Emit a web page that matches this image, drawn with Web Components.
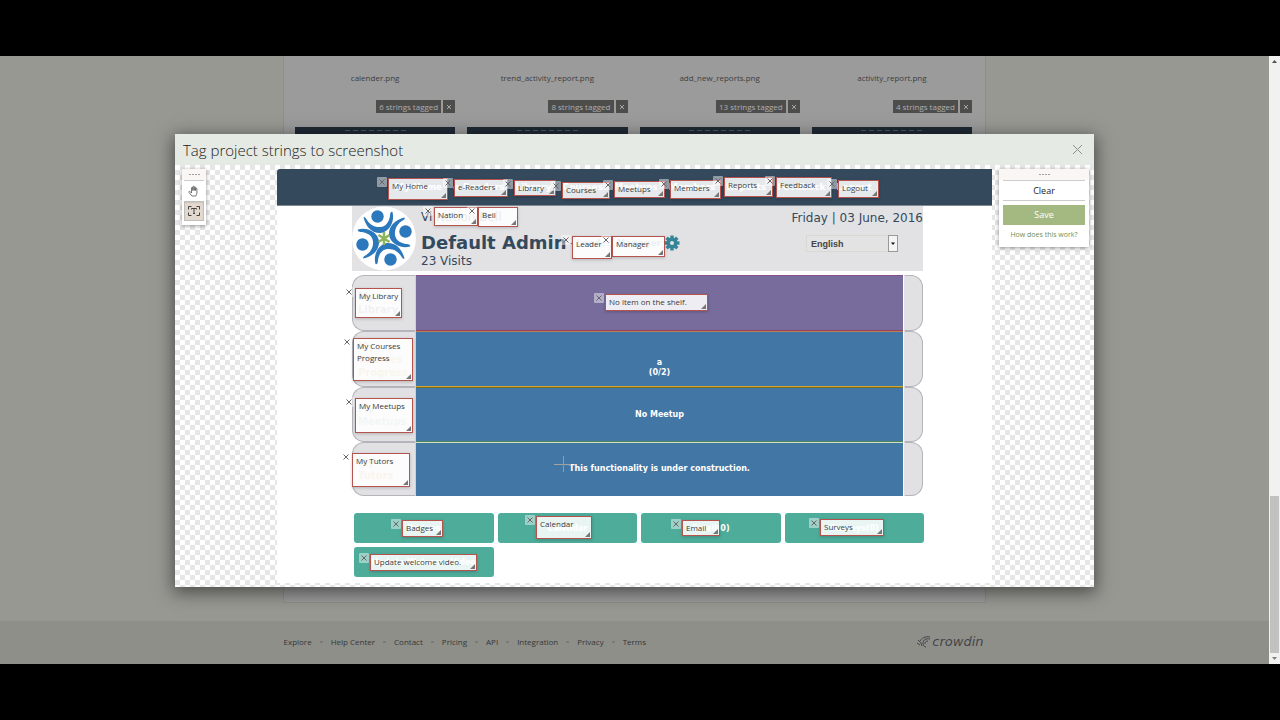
<!DOCTYPE html>
<html lang="en">
<head>
<meta charset="utf-8">
<title>Tag project strings to screenshot</title>
<style>
html,body{margin:0;background:#000}
body{font-family:"Open Sans",sans-serif;font-size:8px;line-height:12px;color:#444}
</style>
</head>
<body>
<app-stage>
  <files-panel>
    <file-card name="calender.png" tagged="6"></file-card>
    <file-card name="trend_activity_report.png" tagged="8"></file-card>
    <file-card name="add_new_reports.png" tagged="13"></file-card>
    <file-card name="activity_report.png" tagged="4"></file-card>
  </files-panel>
  <site-footer></site-footer>
  <tag-dialog slot="dialog" heading="Tag project strings to screenshot">
    <tool-palette slot="tools"></tool-palette>
    <shot-canvas>
      <site-nav></site-nav>
      <user-banner></user-banner>
      <shelf-list>
        <shelf-row label="My Library" tone="purple"></shelf-row>
        <shelf-row label="My Courses Progress" tone="orange">a<br>(0/2)</shelf-row>
        <shelf-row label="My Meetups" tone="olive">No Meetup</shelf-row>
        <shelf-row label="My Tutors" tone="green">This functionality is under construction.</shelf-row>
      </shelf-list>
      <quick-links></quick-links>
      <string-tag slot="tag" x="111" y="9" w="60" h="22">My Home</string-tag>
      <string-tag slot="tag" x="177" y="10" w="54" h="18">e-Readers</string-tag>
      <string-tag slot="tag" x="237" y="11" w="42" h="16">Library</string-tag>
      <string-tag slot="tag" x="285" y="13" w="48" h="17">Courses</string-tag>
      <string-tag slot="tag" x="337" y="12" w="51" h="17">Meetups</string-tag>
      <string-tag slot="tag" x="393" y="11" w="51" h="19">Members</string-tag>
      <string-tag slot="tag" x="447" y="8" w="49" h="20">Reports</string-tag>
      <string-tag slot="tag" x="499" y="8" w="56" h="21">Feedback</string-tag>
      <string-tag slot="tag" x="561" y="11" w="41" h="18">Logout</string-tag>
      <string-tag slot="tag" x="157" y="38" w="44" h="19">Nation</string-tag>
      <string-tag slot="tag" x="201" y="38" w="40" h="20">Bell</string-tag>
      <string-tag slot="tag" x="295" y="67" w="40" h="23">Leader</string-tag>
      <string-tag slot="tag" x="335" y="67" w="53" h="21">Manager</string-tag>
      <string-tag slot="tag" x="78" y="119" w="47" h="30">My Library</string-tag>
      <string-tag slot="tag" x="328" y="125" w="103" h="17">No item on the shelf.</string-tag>
      <string-tag slot="tag" x="76" y="169" w="60" h="43" wrap>My Courses Progress</string-tag>
      <string-tag slot="tag" x="78" y="229" w="58" h="35">My Meetups</string-tag>
      <string-tag slot="tag" x="75" y="284" w="58" h="34">My Tutors</string-tag>
      <string-tag slot="tag" x="125" y="351" w="41" h="17">Badges</string-tag>
      <string-tag slot="tag" x="259" y="347" w="56" h="23">Calendar</string-tag>
      <string-tag slot="tag" x="405" y="351" w="38" h="16">Email</string-tag>
      <string-tag slot="tag" x="543" y="350" w="64" h="17">Surveys</string-tag>
      <string-tag slot="tag" x="93" y="385" w="107" h="17">Update welcome video.</string-tag>
    </shot-canvas>
    <action-panel slot="actions"></action-panel>
  </tag-dialog>
</app-stage>

<script>
class BaseElement extends HTMLElement {
  connectedCallback() {
    if (this.shadowRoot) return;
    this.attachShadow({ mode: 'open' }).innerHTML = this.render();
  }
}
const define = (name, render) =>
  customElements.define(name, class extends BaseElement { render() { return render(this); } });

/* Viewport frame: page area between two black bands, with the page scrollbar */
define('app-stage', () => `
<style>
:host{display:flex;flex-direction:column;min-height:100vh;box-sizing:border-box;padding:56px 0}
.view{flex:1;display:flex;position:relative;background:#989893}
.page{flex:1;min-width:0;display:flex;flex-direction:column;position:relative}
::slotted([slot=dialog]){position:absolute;top:78px;left:0;right:0;margin:0 auto}
.bar{width:11px;display:flex;flex-direction:column;justify-content:flex-end;align-items:center;background:#f1f1f1}
.thumb{width:9px;height:157px;background:#c1c1c1}
svg{display:block}
.gap{flex:1}
</style>
<div class="view">
  <div class="page"><slot></slot><slot name="dialog"></slot></div>
  <div class="bar"><svg width="11" height="11"><path d="M5.500 4l2.500 3h-5z" fill="#505050"/></svg><div class="gap"></div>
  <div class="thumb"></div><svg width="11" height="11"><path d="M3 4h5l-2.500 3z" fill="#808080"/></svg></div>
</div>`);

define('files-panel', () => `
<style>
:host{flex:1;display:grid;grid-template-columns:repeat(4,1fr);gap:12px;align-content:start;box-sizing:border-box;
 width:703px;max-width:100%;margin:0 auto 18px;padding:16px 13px 0 11px;background:#9b9b9b;border:1px solid #8d8d8b;border-top:0}
</style><slot></slot>`);

define('file-card', el => `
<style>
:host{display:flex;flex-direction:column}
.name{text-align:center;color:#3e3e3e}
.row{display:flex;justify-content:flex-end;gap:2px;margin:16px 0 14px}
.count,button{box-sizing:border-box;height:13px;line-height:13px;padding:0 3px;background:#4d4d4c;color:#aeaeae;border:0}
button{width:12px;padding:2px;display:block}
svg{display:block}
.thumb{height:40px;background:#1f2a36;display:flex;justify-content:center;gap:3px;padding-top:3px;box-sizing:border-box}
.thumb i{width:5px;height:1px;background:#4a5662}
</style>
<div class="name">${el.getAttribute('name')}</div>
<div class="row"><span class="count">${el.getAttribute('tagged')} strings tagged</span>
<button aria-label="Remove"><svg width="8" height="8"><path d="M2 2l4 4M6 2l-4 4" stroke="#a5a5a5"/></svg></button></div>
<div class="thumb">${'<i></i>'.repeat(8)}</div>`);

define('site-footer', () => `
<style>
:host{display:block;background:#8f8f89}
footer{display:flex;align-items:center;justify-content:space-between;box-sizing:border-box;width:702px;max-width:100%;height:43px;margin:0 auto;padding:0 2px 2px 0}
nav{display:flex;gap:8px}
a{color:#33383b;text-decoration:none}
nav i{width:3px;height:2px;margin-top:5px;background:#7b7b77}
.logo{display:flex;align-items:center;gap:1px;font:italic 13px "DejaVu Sans",sans-serif;color:#42464a}
.logo svg{display:block}
</style>
<footer><nav>${['Explore','Help Center','Contact','Pricing','API','Integration','Privacy','Terms'].map(t => `<a href="#">${t}</a>`).join('<i></i>')}</nav>
<a class="logo" href="#"><svg width="14" height="12" viewBox="0 0 14 12" fill="none" stroke="#42464a"><path d="M13 1C8 0 5 2 3 5M13 3C9 2 6 4 6 7c0 2 1 4 3 4M11 5C9 5 8 6 8 8M1 4l3 3 1 3M0 7l3 2"/></svg>crowdin</a></footer>`);

define('tag-dialog', el => `
<style>
:host{display:block;width:919px;max-width:calc(100% - 24px);box-shadow:0 4px 16px 2px rgba(0,0,0,.5);background:#fff}
header{display:flex;align-items:center;justify-content:space-between;height:31px;padding:0 11px 0 8px;background:#e6eae4}
h2{margin:0;font-size:15px;line-height:20px;font-weight:300;color:#222}
button{display:block;padding:0;border:0;background:none}
svg{display:block}
.body{display:flex;align-items:flex-start;padding:4px 5px 4px 7px;
 background:repeating-conic-gradient(#e6e6e6 0 25%,#fff 0 50%) 0 0/10px 10px}
::slotted(shot-canvas){margin:0 7px 0 auto}
</style>
<header><h2>${el.getAttribute('heading')}</h2><button aria-label="Close"><svg width="11" height="11"><path d="M1 1l9 9M10 1l-9 9" stroke="#8d918c"/></svg></button></header>
<div class="body"><slot name="tools"></slot><slot></slot><slot name="actions"></slot></div>`);

const grip = '<div class="grip"><i></i><i></i><i></i><i></i></div>';
const gripCss = `.grip{display:flex;justify-content:center;gap:1px;height:11px;align-items:center;background:#faf6f3}
.grip i{width:2px;height:1px;background:#a0a0a0}`;

define('tool-palette', () => `
<style>
:host{display:block;width:24px;padding-bottom:4px;background:#fff;box-shadow:0 1px 4px rgba(0,0,0,.4)}
${gripCss}
.tools{display:flex;flex-direction:column;margin:0 2px;border-top:1px solid #ccc}
button{display:flex;align-items:center;justify-content:center;height:20px;padding:0;border:0;background:none}
button.on{background:#e3d9cf;box-shadow:inset 0 0 0 1px #c0c0ba,inset 0 1px 2px #999}
</style>
${grip}
<div class="tools">
<button aria-label="Pan"><svg width="12" height="12" viewBox="0 0 12 12" fill="none" stroke="#555"><path d="M4 11L1 7.500C.5 6.500 1.500 6 2.300 6.700L3.500 8V3c0-1 1.300-1 1.300 0v2.500V2c0-1 1.400-1 1.400 0v3.500V2.500c0-1 1.400-1 1.400 0v3V4c0-1 1.300-1 1.300 0v4c0 1-.5 2-1 3z" stroke-width=".8"/></svg></button>
<button class="on" aria-label="Select text"><svg width="12" height="12" viewBox="0 0 12 12" fill="none" stroke="#444"><path d="M3.500 1.500h-3v3M.5 7.500v3h3M8.500 1.500h3v3M11.500 7.500v3h-3M3.500 4.500v-1h5v1M6 3.500v5M5 8.500h2"/></svg></button>
</div>`);

define('action-panel', () => `
<style>
:host{display:block;width:90px;background:#fff;box-shadow:0 1px 4px rgba(0,0,0,.4);padding-bottom:6px}
${gripCss}
.col{display:flex;flex-direction:column;margin:0 4px}
button{height:20px;padding:0;border:0;background:none;font:inherit;font-size:9px;line-height:12px;color:#222}
.clear{border:solid #ccc;border-width:1px 0;height:21px}
.save{margin:4px 0 0;background:#a3b981;color:#fff}
a{align-self:center;margin-top:4px;font-size:7px;color:#74904f;text-decoration:none}
</style>
${grip}<div class="col"><button class="clear">Clear</button><button class="save">Save</button><a href="#">How does this work?</a></div>`);

/* Screenshot being tagged; tags are pinned over it */
define('shot-canvas', () => `
<style>
:host{display:block;position:relative;flex:none;width:715px;padding-bottom:6px;background:#fff;border-radius:3px 0 0 0;font-family:"DejaVu Sans",sans-serif}
.cross{position:absolute;left:277px;top:286px}
.inner{display:flex;flex-direction:column}
</style>
<div class="inner"><slot></slot></div><slot name="tag"></slot>
<svg class="cross" width="17" height="17"><path d="M0 9.500h17" stroke="#a2a4a0"/><path d="M9.500 1v16" stroke="#c98b62"/></svg>`);

define('site-nav', () => `
<style>
:host{display:block;background:#34495c;border-bottom:1px solid #7f8a92;border-radius:3px 0 0 0}
nav{display:flex;gap:11px;align-items:center;height:36px;padding-left:118px}
a{font-size:9px;font-weight:bold;color:#fff;text-decoration:none}
</style>
<nav>${['My Home','e-Readers','Library','Courses','Meetups','Members','Reports','Feedback','Logout'].map(t => `<a href="#">${t}</a>`).join('')}</nav>`);

define('user-banner', () => `
<style>
:host{display:flex;height:65px;margin:0 69px 0 75px;background:#e2e2e4;color:#34495c}
.logo{display:block;flex:none}
.who{display:flex;flex-direction:column;margin-left:5px}
.greet{font-size:12px;line-height:16px;margin-top:3px}
h1{display:flex;align-items:center;margin:8px 0 0;font-size:18px;line-height:20px;white-space:nowrap}
h1 span{font-size:9px;color:#5a8f98;margin:0 3px}
.visits{font-size:12px;line-height:16px}
.side{margin-left:auto;display:flex;flex-direction:column;align-items:flex-end;font-size:12px;line-height:16px;padding-top:4px}
.pick{position:relative;margin:9px 25px 0 0}
select{display:block;appearance:none;width:92px;height:17px;padding:0 14px 0 4px;border:1px solid #d9d9d4;border-radius:0;background:#e3e3e3;font:bold 9px "Liberation Sans",sans-serif;color:#444}
.pick svg{position:absolute;right:0;top:0;pointer-events:none}
</style>
<svg class="logo" width="64" height="65" viewBox="0 0 64 65"><circle cx="32" cy="32.500" r="32" fill="#fff"/>
<defs><g id="p"><circle cx="25.500" cy="10.500" r="6.200"/><path d="M11.500 11.500C14 21 20 27.500 29 27C38 25.500 43 15 40.500 6C39 5 38 7 38 10C37 16 34 20.500 28.500 21C22 21.500 17 18 14 12.500C13 11 12 11 11.500 11.500z"/></g></defs>
<g fill="#2b78bd"><use href="#p"/><use href="#p" transform="rotate(90 32 32)"/><use href="#p" transform="rotate(180 32 32)"/><use href="#p" transform="rotate(270 32 32)"/></g>
<path d="M32 26v13M26.500 29l11 7M37.500 29l-11 7" stroke="#8db55a" stroke-width="2.500"/></svg>
<div class="who"><div class="greet">Vi Nation Bell</div>
<h1>Default Admin<span>- Leader, Manager</span><svg width="16" height="16" viewBox="-8 -8 16 16"><g fill="#358597"><circle r="5.500"/>${[0,45,90,135].map(a => `<rect x="-1.700" y="-7.500" width="3.400" height="15" transform="rotate(${a})"/>`).join('')}</g><circle r="2" fill="#e2e2e4"/></svg></h1>
<div class="visits">23 Visits</div></div>
<div class="side"><div>Friday | 03 June, 2016</div>
<div class="pick"><select aria-label="Language"><option>English</option></select><svg width="10" height="17"><rect x=".5" y=".5" width="9" height="16" fill="#f4f4f4" stroke="#999"/><path d="M3 7.500h4l-2 2.500z" fill="#111"/></svg></div></div>`);

define('shelf-list', () => `
<style>:host{display:flex;flex-direction:column;margin:4px 69px 0 75px}</style><slot></slot>`);

const tones = {
  purple: ['#776c9c', '#84508a', '#9a3f5c', '#8d8d99'],
  orange: ['#4276a5', '#b5805c', '#d3a52f', '#c9b070'],
  olive: ['#4276a5', '#77701f', '#4f8262', '#8fb0b0'],
  green: ['#4276a5', '#cfe3ba', '#4276a5', '#d0a070']
};
define('shelf-row', el => {
  const [bg, top, bottom, ink] = tones[el.getAttribute('tone')];
  return `
<style>
:host{display:flex;height:56px;color:#fff;font-size:8px;font-weight:bold;line-height:10px}
:host([tone=olive]){height:55px}
:host([tone=green]){height:54px}
.label,.end{box-sizing:border-box;background:#e1e1e3;border:1px solid #b4b4ba}
.label{display:flex;align-items:center;width:64px;border-radius:12px 0 0 12px;border-right-color:#cfcfd4;padding:0 0 0 5px;font-size:10px;line-height:13px;color:${ink}}
.label span{width:min-content}
.main{flex:1;display:flex;align-items:center;justify-content:center;text-align:center;background:${bg};border:solid;border-width:1px 0;border-color:${top} transparent ${bottom}}
:host([tone=orange]) .main{padding-top:18px;height:36px}
.end{width:19px;margin-left:1px;border-left-color:#e1e1e3;border-radius:0 12px 12px 0}
</style>
<div class="label"><span>${el.getAttribute('label')}</span></div><div class="main"><div><slot></slot></div></div><div class="end"></div>`;
});

define('quick-links', () => `
<style>
:host{display:grid;grid-template-columns:repeat(4,1fr);gap:4px;margin:17px 68px 0 77px}
button{height:30px;padding:0;border:0;border-radius:3px;background:#4eac9b;color:#fff;font:bold 8px "DejaVu Sans",sans-serif}
</style>
${['Badges','Calendar','Email(0)','Surveys(0)','Update Welcome Video'].map(t => `<button>${t}</button>`).join('')}`);

define('string-tag', el => {
  const px = n => el.getAttribute(n) + 'px';
  return `
<style>
:host{display:block;position:absolute;box-sizing:border-box;left:${px('x')};top:${px('y')};width:${px('w')};height:${px('h')};
 padding:1px 0 0 3px;border:1px solid #b5544e;background:rgba(255,255,255,.88);box-shadow:0 1px 3px rgba(0,0,0,.2);
 font:8px/12px "Open Sans",sans-serif;color:#3b3b3b;white-space:nowrap}
:host([wrap]){white-space:normal}
button{position:absolute;left:-12px;top:-2px;width:10px;height:10px;padding:0;border:0;border-radius:1px;background:rgba(255,255,255,.45)}
svg{display:block}
.size{position:absolute;right:1px;bottom:1px}
</style>
<button aria-label="Remove tag"><svg width="10" height="10"><path d="M2.500 2.500l5 5M7.500 2.500l-5 5" stroke="#666"/></svg></button><slot></slot>
<svg class="size" width="5" height="5"><path d="M5 0v5H0z" fill="#777"/></svg>`;
});
</script>
</body>
</html>
